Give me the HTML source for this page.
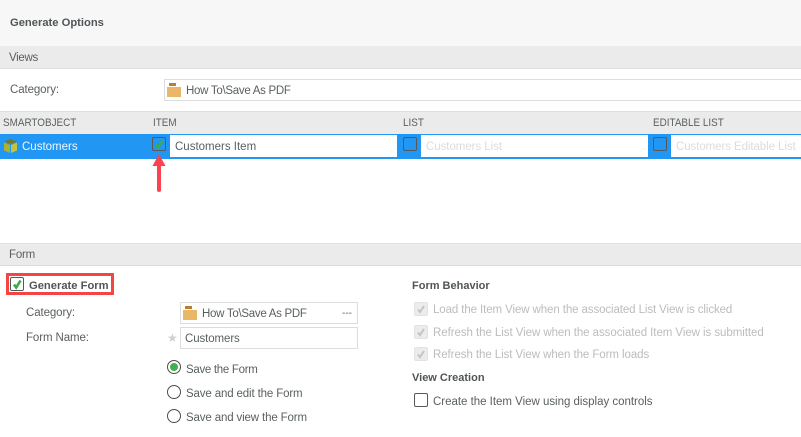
<!DOCTYPE html>
<html><head><meta charset="utf-8"><style>
html,body{margin:0;padding:0;background:#fff}
#p{position:relative;width:801px;height:437px;overflow:hidden;font-family:"Liberation Sans",sans-serif;font-size:11.5px;color:#5a5f61;background:#fff}
.a{position:absolute;box-sizing:border-box}
.t{position:absolute;white-space:nowrap;line-height:14px}
.band{position:absolute;left:0;width:801px;background:#ebebeb;box-sizing:border-box}
.inp{position:absolute;box-sizing:border-box;background:#fff;border:1px solid #ddd}
.cb{position:absolute;box-sizing:border-box;border:1px solid #55595b;border-radius:2px}
.dis{position:absolute;box-sizing:border-box;width:14px;height:14px;background:#ececec;border:1px solid #e2e2e2;border-radius:2px}
.r{position:absolute;box-sizing:border-box;width:14px;height:14px;border-radius:50%;border:1.5px solid #4a4e50;background:#fff}
svg{position:absolute;overflow:visible}
.g{color:#bcbcbc}
.ph{color:#dcdcdc}
.h{font-size:11px;transform:scaleX(.9);transform-origin:left center}
b{font-weight:bold;color:#505557}
</style></head><body><div id="p">
<div class="a" style="left:0;top:0;width:801px;height:46px;background:#f7f7f7"></div>
<b class="t" style="left:10px;top:16px;font-size:11.2px">Generate Options</b>

<div class="band" style="top:46px;height:23px;border-bottom:1px solid #ddd"></div>
<div class="t" style="left:9px;top:51px;letter-spacing:-.3px">Views</div>
<div class="t" style="left:10px;top:83px;letter-spacing:-.1px">Category:</div>
<div class="inp" style="left:164px;top:79px;width:640px;height:22px"></div>
<svg style="left:167px;top:83px" width="15" height="15"><rect x="2" y="0" width="7" height="3" fill="#b87f2e"/><rect x="0" y="4" width="14" height="10" fill="#e9b767"/></svg>
<div class="t" style="left:186px;top:84px;letter-spacing:-.28px">How To\Save As PDF</div>

<div class="band" style="top:111px;height:23px;border-top:1px solid #ddd"></div>
<div class="t h" style="left:3px;top:116px">SMARTOBJECT</div>
<div class="t h" style="left:153px;top:116px">ITEM</div>
<div class="t h" style="left:403px;top:116px">LIST</div>
<div class="t h" style="left:653px;top:116px">EDITABLE LIST</div>

<div class="a" style="left:0;top:134px;width:801px;height:25px;background:#2196f3"></div>
<svg style="left:3px;top:138px" width="16" height="16" viewBox="0 0 16 16"><path d="M1 3.500 7.500 1 14 3.500 7.500 6Z" fill="#767a28"/><path d="M1 4.500 7 7V15L1 12.500Z" fill="#aeb02f"/><path d="M14 4.500 8 7V15L14 12.500Z" fill="#c3c33c"/></svg>
<div class="t" style="left:22px;top:140px;color:#eef7ff">Customers</div>

<div class="cb" style="left:152px;top:137px;width:14px;height:14px"></div>
<svg style="left:152px;top:137px" width="14" height="14"><path d="M4 7.500 6.200 10 10.500 3.500" fill="none" stroke="#3cab4c" stroke-width="2.600"/></svg>
<div class="a" style="left:170px;top:135px;width:227px;height:22px;background:#fff"></div>
<div class="t" style="left:175px;top:140px">Customers Item</div>

<div class="cb" style="left:403px;top:137px;width:14px;height:14px"></div>
<div class="a" style="left:421px;top:135px;width:227px;height:22px;background:#fff"></div>
<div class="t ph" style="left:426px;top:140px;letter-spacing:-.05px">Customers List</div>

<div class="cb" style="left:653px;top:137px;width:14px;height:14px"></div>
<div class="a" style="left:671px;top:135px;width:130px;height:22px;background:#fff"></div>
<div class="t ph" style="left:676px;top:140px;letter-spacing:-.08px">Customers Editable List</div>

<svg style="left:153px;top:154px" width="13" height="38"><path d="M6 0 12.500 12H8V37Q6 39 4 37V12H-.500Z" fill="#fb4350"/></svg>

<div class="band" style="top:243px;height:23px;border-top:1px solid #e2e2e2;border-bottom:1px solid #ddd"></div>
<div class="t" style="left:9px;top:248px;letter-spacing:-.2px">Form</div>

<div class="a" style="left:6px;top:273px;width:108px;height:22px;border:3px solid #f44444;background:#fff"></div>
<div class="cb" style="left:10px;top:277px;width:14px;height:14px"></div>
<svg style="left:10px;top:277px" width="14" height="14"><path d="M4 7.500 6.200 10.500 10.500 3.500" fill="none" stroke="#3cab4c" stroke-width="2.600"/></svg>
<b class="t" style="left:29px;top:279px;font-size:11.200px">Generate Form</b>

<div class="t" style="left:26px;top:306px;letter-spacing:-.1px">Category:</div>
<div class="inp" style="left:180px;top:302px;width:178px;height:22px"></div>
<svg style="left:183px;top:306px" width="15" height="15"><rect x="2" y="0" width="7" height="3" fill="#b87f2e"/><rect x="0" y="4" width="14" height="10" fill="#e9b767"/></svg>
<div class="t" style="left:202px;top:307px;letter-spacing:-.28px">How To\Save As PDF</div>
<div class="t" style="left:342px;top:307px;font-size:10px">---</div>

<div class="t" style="left:26px;top:331px;letter-spacing:-.1px">Form Name:</div>
<div class="t" style="left:167px;top:331px;color:#cfcfcf;font-size:12px">★</div>
<div class="inp" style="left:180px;top:327px;width:178px;height:22px"></div>
<div class="t" style="left:185px;top:332px;letter-spacing:-.1px">Customers</div>

<div class="r" style="left:167px;top:360px"></div>
<div class="a" style="left:170px;top:363px;width:8px;height:8px;border-radius:50%;background:#46b050"></div>
<div class="t" style="left:186px;top:363px;letter-spacing:-.3px">Save the Form</div>
<div class="r" style="left:167px;top:385px"></div>
<div class="t" style="left:186px;top:387px;letter-spacing:-.14px">Save and edit the Form</div>
<div class="r" style="left:167px;top:409px"></div>
<div class="t" style="left:186px;top:411px;letter-spacing:-.14px">Save and view the Form</div>

<b class="t" style="left:412px;top:279px;font-size:11px">Form Behavior</b>
<div class="dis" style="left:414px;top:302px"></div>
<svg style="left:414px;top:302px" width="14" height="14"><path d="M4 7.500 6 10 10 4" fill="none" stroke="#c4c4c4" stroke-width="2"/></svg>
<div class="t g" style="left:433px;top:303px;letter-spacing:-.1px">Load the Item View when the associated List View is clicked</div>
<div class="dis" style="left:414px;top:325px"></div>
<svg style="left:414px;top:325px" width="14" height="14"><path d="M4 7.500 6 10 10 4" fill="none" stroke="#c4c4c4" stroke-width="2"/></svg>
<div class="t g" style="left:433px;top:326px;letter-spacing:-.06px">Refresh the List View when the associated Item View is submitted</div>
<div class="dis" style="left:414px;top:347px"></div>
<svg style="left:414px;top:347px" width="14" height="14"><path d="M4 7.500 6 10 10 4" fill="none" stroke="#c4c4c4" stroke-width="2"/></svg>
<div class="t g" style="left:433px;top:348px;letter-spacing:-.07px">Refresh the List View when the Form loads</div>
<b class="t" style="left:412px;top:371px;font-size:11px">View Creation</b>
<div class="cb" style="left:414px;top:393px;width:14px;height:14px"></div>
<div class="t" style="left:433px;top:395px;letter-spacing:-.02px">Create the Item View using display controls</div>
</div></body></html>
